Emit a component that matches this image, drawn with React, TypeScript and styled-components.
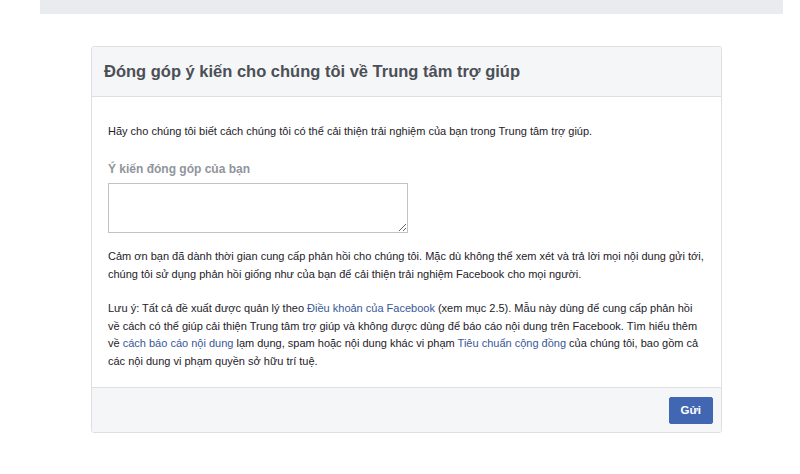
import React, { useState } from 'react';
import styled, { createGlobalStyle } from 'styled-components';

const GlobalStyle = createGlobalStyle`
  body {
    margin: 0;
    background: #ffffff;
    font-family: "Liberation Sans", Arial, Helvetica, sans-serif;
    color: #1d2129;
  }
`;

const FeedbackCard: React.FC = () => {
  const [feedback, setFeedback] = useState('');

  return (
    <Card>
      <CardHeader>
        <Title>Đóng góp ý kiến cho chúng tôi về Trung tâm trợ giúp</Title>
      </CardHeader>
      <CardBody>
        <Intro>Hãy cho chúng tôi biết cách chúng tôi có thể cải thiện trải nghiệm của bạn trong Trung tâm trợ giúp.</Intro>
        <FieldLabel htmlFor="feedback">Ý kiến đóng góp của bạn</FieldLabel>
        <FeedbackInput id="feedback" value={feedback} onChange={(e) => setFeedback(e.target.value)} />
        <Paragraph>
          Cảm ơn bạn đã dành thời gian cung cấp phản hồi cho chúng tôi. Mặc dù không thể xem xét và trả lời mọi nội dung gửi tới,
          chúng tôi sử dụng phản hồi giống như của bạn để cải thiện trải nghiệm Facebook cho mọi người.
        </Paragraph>
        <Paragraph>
          Lưu ý: Tất cả đề xuất được quản lý theo <Link href="#">Điều khoản của Facebook</Link> (xem mục 2.5). Mẫu này dùng để cung cấp phản hồi
          về cách có thể giúp cải thiện Trung tâm trợ giúp và không được dùng để báo cáo nội dung trên Facebook. Tìm hiểu thêm
          về <Link href="#">cách báo cáo nội dung</Link> lạm dụng, spam hoặc nội dung khác vi phạm <Link href="#">Tiêu chuẩn cộng đồng</Link> của chúng tôi, bao gồm cả
          các nội dung vi phạm quyền sở hữu trí tuệ.
        </Paragraph>
      </CardBody>
      <CardFooter>
        <SubmitButton type="button">Gửi</SubmitButton>
      </CardFooter>
    </Card>
  );
};

const App: React.FC = () => (
  <>
    <GlobalStyle />
    <Page>
      <TopBar />
      <FeedbackCard />
    </Page>
  </>
);

const Page = styled.div`
  width: 800px;
  min-height: 474px;
`;

const TopBar = styled.div`
  margin-left: 40px;
  width: 743px;
  height: 14px;
  background: #e9ebee;
`;

const Card = styled.div`
  margin: 32px 0 0 91px;
  width: 631px;
  box-sizing: border-box;
  border: 1px solid #dddfe2;
  border-radius: 3px;
  background: #ffffff;
  overflow: hidden;
`;

const CardHeader = styled.div`
  height: 49px;
  display: flex;
  align-items: center;
  padding: 0 12px;
  background: #f5f6f7;
  border-bottom: 1px solid #dddfe2;
`;

const Title = styled.h2`
  margin: 0;
  font-size: 16.5px;
  font-weight: bold;
  color: #4b4f56;
`;

const CardBody = styled.div`
  padding: 26px 16px 17px;
  font-size: 11px;
  line-height: 17px;
`;

const Intro = styled.p`
  margin: 0 0 20px;
`;

const FieldLabel = styled.label`
  display: block;
  margin-bottom: 5px;
  font-size: 12px;
  font-weight: bold;
  line-height: 18px;
  color: #90949c;
`;

const FeedbackInput = styled.textarea`
  display: block;
  box-sizing: border-box;
  width: 300px;
  height: 50px;
  margin: 0 0 15px;
  border: 1px solid #bec3c9;
  font-family: inherit;
  font-size: 12px;
`;

const Paragraph = styled.p`
  margin: 0 0 17px;
  line-height: 17.5px;

  &:last-child {
    margin-bottom: 0;
  }
`;

const Link = styled.a`
  color: #385898;
  text-decoration: none;
`;

const CardFooter = styled.div`
  display: flex;
  justify-content: flex-end;
  align-items: center;
  height: 44px;
  padding: 0 8px;
  background: #f5f6f7;
  border-top: 1px solid #dddfe2;
`;

const SubmitButton = styled.button`
  height: 27px;
  padding: 0 11px;
  border: 1px solid #4267b2;
  border-radius: 2px;
  background: #4267b2;
  color: #ffffff;
  font-family: inherit;
  font-size: 11.5px;
  font-weight: bold;
  cursor: pointer;
`;

export default App;
